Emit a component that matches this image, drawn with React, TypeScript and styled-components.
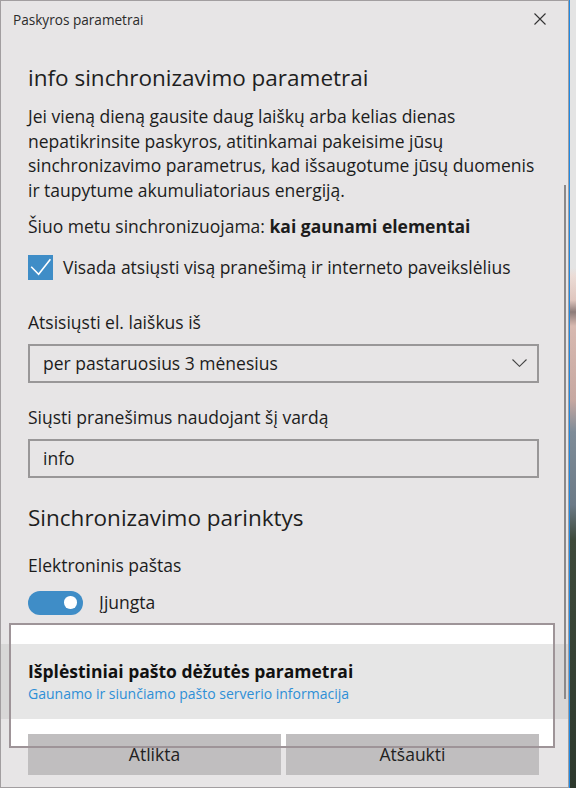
import React from "react";
import styled, { createGlobalStyle } from "styled-components";

const GlobalStyle = createGlobalStyle`
  html, body { margin: 0; padding: 0; }
  body { background: #e4e4e4; font-family: "Open Sans", "Noto Sans", sans-serif; }
  #root { width: 576px; height: 788px; overflow: hidden; }
`;

const Page = styled.div`
  display: flex;
  width: 576px;
  height: 788px;
`;

const Dialog = styled.div`
  position: relative;
  box-sizing: border-box;
  flex: none;
  width: 569px;
  height: 788px;
  background: #e7e5e6;
  border: 1px solid #a29ea0;
  display: flex;
  flex-direction: column;
  color: #1c1c1c;
  font-family: "Open Sans", "Noto Sans", sans-serif;
  overflow: hidden;
`;

const Backdrop = styled.div`
  flex: 1;
  border-left: 1px solid #1e8ae6;
  background: linear-gradient(
    to bottom,
    #e4e4e4 0,
    #e4e4e4 268px,
    #ecdcd6 276px,
    #e0c6be 300px,
    #8d7b78 312px,
    #d8b9b0 326px,
    #c7a8a1 400px,
    #7f8c98 432px,
    #6c7a86 505px,
    #3f4a3a 540px,
    #2e392d 788px
  );
`;

const TitleBar = styled.div`
  flex: none;
  height: 36px;
  display: flex;
  align-items: center;
  justify-content: space-between;
  padding: 0 22px 0 12px;
`;

const TitleText = styled.span`
  font-size: 13.6px;
  color: #2b2b2b;
`;

const CloseIcon = styled.svg`
  width: 12px;
  height: 12px;
  display: block;
`;

const Content = styled.div`
  display: flex;
  flex-direction: column;
  padding: 0 29px 0 27px;
`;

const Heading = styled.h2<{ $top: number }>`
  margin: ${(p) => p.$top}px 0 0;
  font-size: 22.5px;
  line-height: 31px;
  font-weight: 400;
  color: #1e1e1e;
  white-space: nowrap;
`;

const Text = styled.div<{ $top: number }>`
  margin-top: ${(p) => p.$top}px;
  font-size: 17.5px;
  line-height: 24.5px;
  white-space: nowrap;
`;

const Strong = styled.b`
  font-weight: 700;
`;

const CheckRow = styled.label`
  margin-top: 16.5px;
  display: flex;
  align-items: center;
  gap: 10px;
  height: 25px;
  font-size: 17.5px;
  line-height: 24.5px;
  white-space: nowrap;
`;

const CheckBox = styled.span`
  flex: none;
  width: 25px;
  height: 25px;
  background: #3f8dc7;
  display: flex;
`;

const Field = styled.div<{ $top: number; $h: number }>`
  box-sizing: border-box;
  margin-top: ${(p) => p.$top}px;
  height: ${(p) => p.$h}px;
  border: 2px solid #999798;
  display: flex;
  align-items: center;
  justify-content: space-between;
  padding: 0 10px 0 13px;
  font-size: 17.5px;
  line-height: 24.5px;
`;

const Chevron = styled.svg`
  width: 15px;
  height: 8px;
  display: block;
`;

const ToggleRow = styled.div`
  margin-top: 13px;
  display: flex;
  align-items: center;
  gap: 16px;
  height: 24px;
  font-size: 17.5px;
  line-height: 24.5px;
`;

const Toggle = styled.span`
  flex: none;
  box-sizing: border-box;
  width: 55px;
  height: 24px;
  border-radius: 12px;
  background: #3f8dc7;
  display: flex;
  align-items: center;
  justify-content: flex-end;
  padding-right: 6.5px;
`;

const Knob = styled.span`
  width: 12.5px;
  height: 12.5px;
  border-radius: 50%;
  background: #ffffff;
`;

const Footer = styled.div`
  position: relative;
  margin-top: 29px;
  display: flex;
  flex-direction: column;
`;

const HighlightFill = styled.div`
  position: absolute;
  z-index: 0;
  top: -21px;
  left: 8px;
  width: 546px;
  height: 125px;
  background: #ffffff;
`;

const HighlightFrame = styled.div`
  position: absolute;
  z-index: 2;
  top: -21px;
  left: 8px;
  width: 546px;
  height: 125px;
  box-sizing: border-box;
  border: 2px solid #9e9498;
  pointer-events: none;
`;

const Band = styled.div`
  position: relative;
  z-index: 1;
  height: 75px;
  box-sizing: border-box;
  padding: 15.5px 29px 0 27px;
  background: rgba(195, 195, 195, 0.42);
  display: flex;
  flex-direction: column;
`;

const BandTitle = styled.div`
  font-size: 17.5px;
  line-height: 24.5px;
  font-weight: 700;
  color: #111;
  white-space: nowrap;
`;

const BandLink = styled.a`
  font-size: 14px;
  line-height: 19px;
  color: #2e8fd6;
  text-decoration: none;
  white-space: nowrap;
`;

const Buttons = styled.div`
  position: relative;
  z-index: 1;
  margin-top: 15px;
  padding: 0 29px 0 27px;
  display: grid;
  grid-template-columns: 1fr 1fr;
  gap: 5px;
`;

const Button = styled.button`
  height: 41px;
  border: none;
  background: #c0bebf;
  color: #222;
  font-family: "Open Sans", "Noto Sans", sans-serif;
  font-size: 17.5px;
  padding: 0;
`;

const ScrollThumb = styled.div`
  position: absolute;
  z-index: 3;
  top: 184px;
  right: 2px;
  width: 2px;
  height: 514px;
  background: #8b898a;
`;

export default function App() {
  return (
    <>
      <GlobalStyle />
      <Page>
        <Dialog>
          <TitleBar>
            <TitleText>Paskyros parametrai</TitleText>
            <CloseIcon viewBox="0 0 12 12">
              <path d="M0.5 0.5 L11.5 11.5 M11.5 0.5 L0.5 11.5" stroke="#333" strokeWidth="1.1" fill="none" />
            </CloseIcon>
          </TitleBar>
          <Content>
            <Heading $top={25}>info sinchronizavimo parametrai</Heading>
            <Text $top={11}>
              Jei vieną dieną gausite daug laiškų arba kelias dienas
              <br />
              nepatikrinsite paskyros, atitinkamai pakeisime jūsų
              <br />
              sinchronizavimo parametrus, kad išsaugotume jūsų duomenis
              <br />
              ir taupytume akumuliatoriaus energiją.
            </Text>
            <Text $top={12}>
              Šiuo metu sinchronizuojama: <Strong>kai gaunami elementai</Strong>
            </Text>
            <CheckRow>
              <CheckBox>
                <svg width="25" height="25" viewBox="0 0 25 25">
                  <path d="M3.2 11.8 L10.6 19.2 L22.4 4.2" stroke="#fff" strokeWidth="1.6" fill="none" />
                </svg>
              </CheckBox>
              Visada atsiųsti visą pranešimą ir interneto paveikslėlius
            </CheckRow>
            <Text $top={29.5}>Atsisiųsti el. laiškus iš</Text>
            <Field $top={9.5} $h={39}>
              <span>per pastaruosius 3 mėnesius</span>
              <Chevron viewBox="0 0 15 8">
                <path d="M0.5 0.5 L7.5 7.3 L14.5 0.5" stroke="#444" strokeWidth="1.1" fill="none" />
              </Chevron>
            </Field>
            <Text $top={22}>Siųsti pranešimus naudojant šį vardą</Text>
            <Field $top={10} $h={38.5}>
              <span>info</span>
            </Field>
            <Heading $top={24.5}>Sinchronizavimo parinktys</Heading>
            <Text $top={20}>Elektroninis paštas</Text>
            <ToggleRow>
              <Toggle>
                <Knob />
              </Toggle>
              Įjungta
            </ToggleRow>
          </Content>
          <Footer>
            <HighlightFill />
            <Band>
              <BandTitle>Išplėstiniai pašto dėžutės parametrai</BandTitle>
              <BandLink href="#">Gaunamo ir siunčiamo pašto serverio informacija</BandLink>
            </Band>
            <Buttons>
              <Button>Atlikta</Button>
              <Button>Atšaukti</Button>
            </Buttons>
            <HighlightFrame />
          </Footer>
          <ScrollThumb />
        </Dialog>
        <Backdrop />
      </Page>
    </>
  );
}
